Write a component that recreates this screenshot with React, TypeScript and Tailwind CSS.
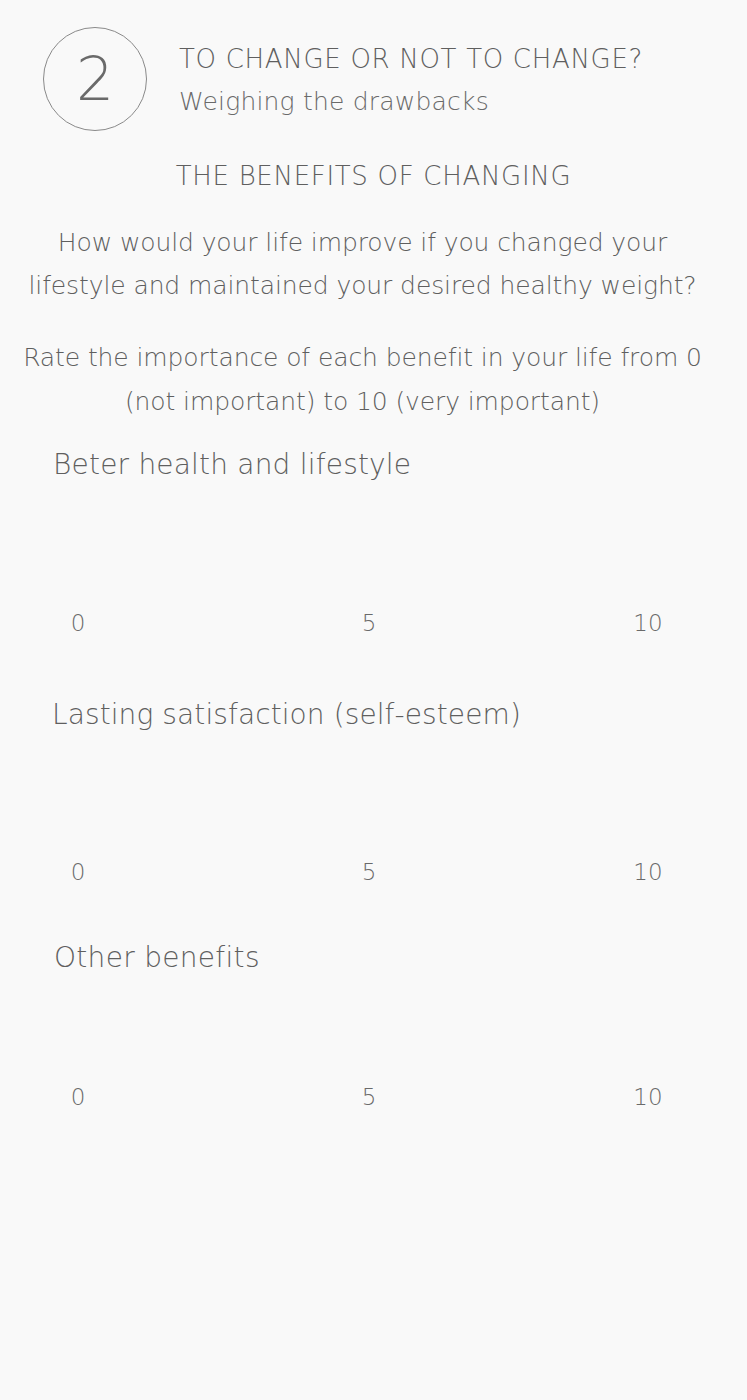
import React from "react";

const font = { fontFamily: '"DejaVu Sans", "Noto Sans", sans-serif', fontWeight: 200 };

function Scale({ h }: { h: string }) {
  return (
    <div className={`flex items-end ${h}`}>
      <div className="relative w-full h-[30px] text-[23px] leading-[30px] text-[#6a6a6a]">
        <span className="absolute left-[78px] -translate-x-1/2">0</span>
        <span className="absolute left-[369px] -translate-x-1/2">5</span>
        <span className="absolute left-[648px] -translate-x-1/2">10</span>
      </div>
    </div>
  );
}

export default function App() {
  return (
    <div className="w-[747px] h-[1400px] bg-[#f9f9f9] text-[#5f5f5f]" style={font}>
      <div className="flex items-start pt-[27px] pl-[43px]">
        <div className="w-[104px] h-[104px] rounded-full border border-[#8a8a8a] flex items-center justify-center text-[60px] leading-none text-[#6a6a6a]">
          2
        </div>
        <div className="ml-[32px] mt-[12px] flex flex-col">
          <div className="text-[26px] leading-[40px] tracking-[0.7px] whitespace-nowrap">TO CHANGE OR NOT TO CHANGE?</div>
          <div className="text-[25px] leading-[45px] tracking-[0.2px] whitespace-nowrap text-[#6a6a6a]">Weighing the drawbacks</div>
        </div>
      </div>
      <div className="mt-[27px] text-center text-[26px] leading-[36px] tracking-[0.7px] whitespace-nowrap">THE BENEFITS OF CHANGING</div>
      <p className="mt-[27px] pr-[22px] text-center text-[25px] leading-[43px] tracking-[-0.1px] whitespace-nowrap">
        How would your life improve if you changed your
        <br />
        lifestyle and maintained your desired healthy weight?
      </p>
      <p className="mt-[29px] pr-[22px] text-center text-[25px] leading-[44px] tracking-[-0.1px] whitespace-nowrap">
        Rate the importance of each benefit in your life from 0
        <br />
        (not important) to 10 (very important)
      </p>
      <div className="mt-[21px] pl-[53px] text-[28px] leading-[40px] tracking-[0.2px]">Beter health and lifestyle</div>
      <Scale h="h-[153px]" />
      <div className="mt-[57px] pl-[52px] text-[28px] leading-[40px] tracking-[0.1px]">Lasting satisfaction (self-esteem)</div>
      <Scale h="h-[152px]" />
      <div className="mt-[51px] pl-[54px] text-[28px] leading-[40px] tracking-[0.3px]">Other benefits</div>
      <Scale h="h-[134px]" />
    </div>
  );
}
